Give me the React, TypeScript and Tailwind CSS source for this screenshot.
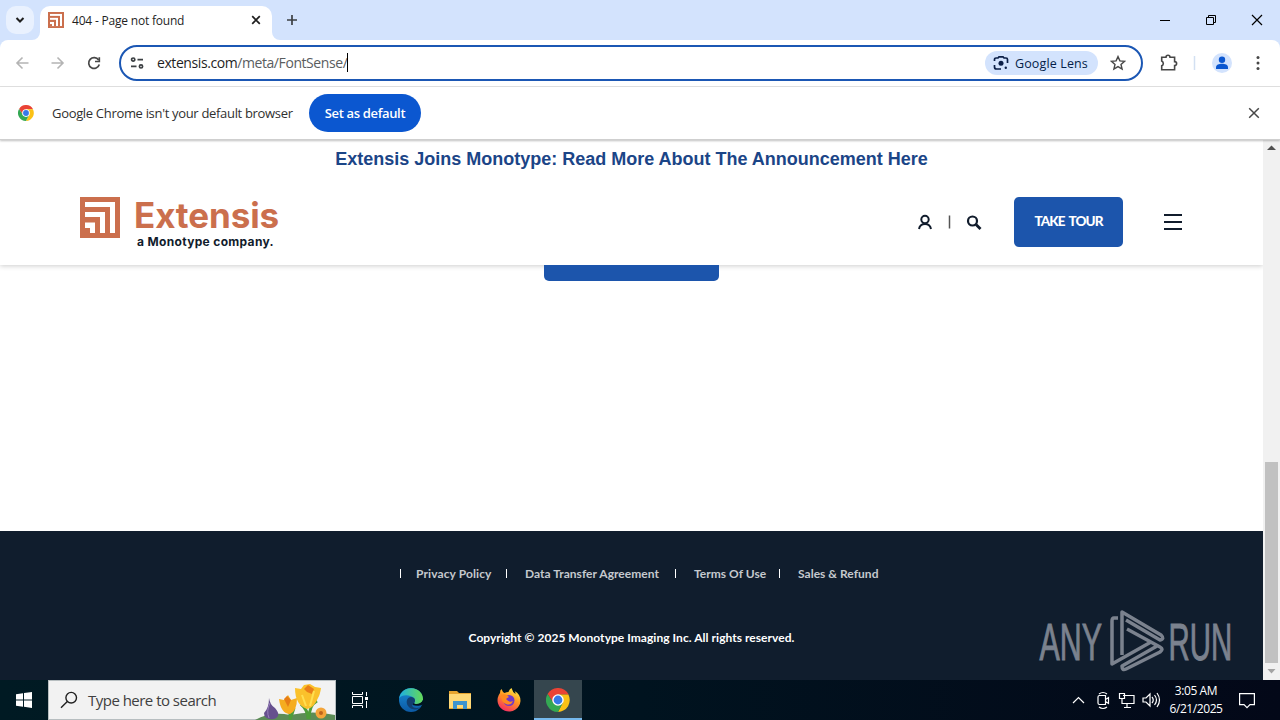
import type { ReactNode } from "react";

const ui = "font-['Open_Sans','Noto_Sans',sans-serif]";

function ExtensisMark({ className }: { className: string }) {
  return (
    <svg className={className} viewBox="0 0 40 41" preserveAspectRatio="none">
      <rect width="40" height="41" fill="#cb6f4d" />
      <rect x="5" y="5" width="30" height="31" fill="#fff" />
      <rect x="5" y="10" width="25" height="26" fill="#cb6f4d" />
      <rect x="5" y="15" width="20" height="21" fill="#fff" />
      <rect x="5" y="20" width="15" height="16" fill="#cb6f4d" />
      <rect x="5" y="25.5" width="10" height="10.5" fill="#fff" />
      <rect x="5" y="31" width="5" height="5" fill="#cb6f4d" />
    </svg>
  );
}

function ChromeLogo({ className }: { className: string }) {
  return (
    <svg className={className} viewBox="0 0 48 48">
      <path d="M3.2 12 14.5 29.5 24 24V13H44.8V12A24 24 0 0 0 3.2 12Z" fill="#ea4335" />
      <path d="M24 13H44.8A24 24 0 0 1 24 48L33.5 29.5Z" fill="#fbc116" />
      <path d="M3.2 12 14.5 29.5 24 35 33.5 29.5 24 48A24 24 0 0 1 3.2 12Z" fill="#34a853" />
      <circle cx="24" cy="24" r="11.5" fill="#fff" />
      <circle cx="24" cy="24" r="8.8" fill="#3579e8" />
    </svg>
  );
}

function TabStrip() {
  return (
    <div className="flex h-10 shrink-0 items-end bg-[#d3e3fd]">
      <button className="mb-1.5 ml-1.5 flex h-7 w-7 items-center justify-center rounded-[10px] bg-[#e9f1fe]">
        <svg className="h-3 w-3" viewBox="0 0 12 12" fill="none" stroke="#1f1f1f" strokeWidth="2">
          <path d="m2.5 4 3.5 3.5L9.5 4" />
        </svg>
      </button>
      <div className="relative ml-1.5 flex h-[34px] w-[232px] items-center rounded-t-[10px] bg-white pb-1.5 pl-2">
        <svg className="absolute bottom-0 -left-2 h-2 w-2" viewBox="0 0 8 8"><path d="M8 0V8H0A8 8 0 0 0 8 0Z" fill="#fff" /></svg>
        <svg className="absolute -right-2 bottom-0 h-2 w-2" viewBox="0 0 8 8"><path d="M0 0V8H8A8 8 0 0 1 0 0Z" fill="#fff" /></svg>
        <ExtensisMark className="h-4 w-4" />
        <span className="ml-2 w-[175px] pt-0.5 text-[12px] tracking-[-0.2px] whitespace-nowrap text-[#1f1f1f]">404 - Page not found</span>
        <svg className="h-[18px] w-[18px]" viewBox="0 0 18 18" stroke="#1f1f1f" strokeWidth="1.7">
          <path d="m5.2 5.2 7.6 7.6m0-7.6-7.6 7.6" />
        </svg>
      </div>
      <svg className="mb-3 ml-3.5 h-4 w-3" viewBox="0 0 12 16" stroke="#3c4043" strokeWidth="1.7">
        <path d="M6 3v10M1 8h10" />
      </svg>
      <div className="mb-2.5 ml-auto flex h-5 items-center pr-[17px]">
        <svg className="h-5 w-[106px]" viewBox="0 0 106 20" fill="none" stroke="#000">
          <path d="M3 10.5h10" />
          <path d="M49.500 7.500h7v7h-7zM51.500 7.500v-2h7v7h-2" />
          <path d="m95 5 10 10m0-10-10 10" strokeWidth="1.2" />
        </svg>
      </div>
    </div>
  );
}

function Toolbar() {
  return (
    <div className="shrink-0 bg-[#d3e3fd]">
      <div className="flex h-[47px] items-start rounded-t-lg border-b border-[#e2e2e2] bg-white pt-[5px]">
        <div className="flex h-9 w-[119px] items-center">
          <svg className="h-5 w-[119px]" viewBox="0 0 119 20" fill="none" strokeWidth="1.6">
            <path d="M28.5 10H17m5.500-5.500L17 10l5.500 5.500" stroke="#b4b4b4" />
            <path d="M51.5 10H63m-5.500-5.500L63 10l-5.500 5.500" stroke="#b4b4b4" />
            <path d="M98.600 7A5.400 5.400 0 1 0 99.300 11.500" stroke="#474747" strokeWidth="1.7" />
            <path d="M99.300 4.200v4.300H95" stroke="#474747" strokeWidth="1.7" />
          </svg>
        </div>
        <div className="flex h-9 w-[1024px] items-center rounded-full border-2 border-[#1b57b4] pl-2">
          <svg className="h-4 w-4" viewBox="0 0 16 16" fill="none" stroke="#3c4043" strokeWidth="1.7">
            <circle cx="4.200" cy="4.600" r="1.600" />
            <path d="M8.500 4.600H14M2 11.400h5.500" />
            <circle cx="12" cy="11.400" r="1.600" />
          </svg>
          <span className="ml-3 pb-0.5 text-[14px] tracking-[-0.42px] whitespace-nowrap text-[#5a5d60]">
            <span className="text-[#1f1f1f]">extensis.com</span>/meta/FontSense/
          </span>
          <span className="mb-0.5 h-[19px] w-px bg-black" />
          <div className="ml-auto flex h-6 w-[113px] items-center rounded-full bg-[#d3e3fd] pl-2">
            <svg className="h-4 w-4" viewBox="0 0 16 16" fill="none" stroke="#0b1f47" strokeWidth="1.7">
              <path d="M1.500 6V4.500a1.500 1.500 0 0 1 1.500-1.500h2l1-1.200h4L11 3h2a1.500 1.500 0 0 1 1.500 1.500V8M1.500 10v2A2 2 0 0 0 3.500 14H8" />
              <circle cx="8" cy="8.300" r="2.500" fill="#0b1f47" stroke="none" />
              <circle cx="12.800" cy="12.800" r="1.200" fill="#0b1f47" stroke="none" />
            </svg>
            <span className="ml-1.5 pt-0.5 text-[12.5px] font-medium tracking-[0.13px] whitespace-nowrap text-[#041e49]">Google Lens</span>
          </div>
          <svg className="mr-[15px] ml-3 h-4 w-4" viewBox="0 0 16 16" fill="none" stroke="#474747" strokeWidth="1.4">
            <path d="m8 1.600 1.900 4.300 4.700.4-3.600 3.100 1.100 4.600L8 11.600 3.900 14 5 9.400 1.400 6.300l4.700-.4Z" />
          </svg>
        </div>
        <svg className="h-9 w-[137px]" viewBox="0 0 137 36" fill="none">
          <path d="M18.700 12.300H23a2 2 0 0 1 4 0h4.600v4.300a2 2 0 0 1 0 4v4.200H18.700v-4a2.600 2.600 0 0 0 0-4.800Z" stroke="#474747" strokeWidth="1.6" />
          <path d="M51.500 11v14" stroke="#d3e0f2" strokeWidth="1.5" />
          <circle cx="79" cy="18" r="10" fill="#d3e3fd" />
          <circle cx="79" cy="14.700" r="3.200" fill="#0b57d0" />
          <path d="M73 24v-1.700c0-4.600 12-4.600 12 0V24Z" fill="#0b57d0" />
          <g fill="#474747"><circle cx="115" cy="12.500" r="1.500" /><circle cx="115" cy="18" r="1.500" /><circle cx="115" cy="23.500" r="1.500" /></g>
        </svg>
      </div>
    </div>
  );
}

function InfoBar() {
  return (
    <div className="relative z-10 flex h-[53px] shrink-0 items-center border-b border-[#cfcfcf] bg-white pl-[18px] shadow-[0_1px_2px_rgba(0,0,0,0.25)]">
      <ChromeLogo className="h-4 w-4" />
      <span className="ml-[18px] w-[257px] pt-0.5 text-[13px] tracking-[-0.32px] whitespace-nowrap text-[#303030]">Google Chrome isn't your default browser</span>
      <button className="h-[38px] w-28 rounded-full bg-[#0b57d0] pt-px text-[13px] font-semibold tracking-[-0.35px] whitespace-nowrap text-white">Set as default</button>
      <svg className="mr-5 ml-auto h-3 w-3" viewBox="0 0 12 12" stroke="#474747" strokeWidth="1.5">
        <path d="m1.200 1.200 9.600 9.600m0-9.600-9.600 9.600" />
      </svg>
    </div>
  );
}

function SiteHeader() {
  return (
    <header className="h-[125px] bg-white shadow-[0_1px_5px_rgba(0,0,0,0.2)]">
      <p className="pt-[5px] text-center font-['Liberation_Sans',sans-serif] text-[18px] leading-7 font-bold whitespace-nowrap text-[#1b4587]">
        Extensis Joins Monotype: Read More About The Announcement Here
      </p>
      <div className="flex items-start pt-6 pl-20">
        <ExtensisMark className="h-[41px] w-10" />
        <div className="-mt-0.5 ml-[15px] flex w-[149px] flex-col font-['Inter',sans-serif] whitespace-nowrap">
          <span className="-ml-px text-[35px] leading-[41px] font-bold tracking-[-0.1px] text-[#cb6f4d]">Extensis</span>
          <span className="ml-0.5 text-[12px] leading-3 font-bold tracking-[0.33px] text-[#111c2c]">a Monotype company.</span>
        </div>
        <svg className="mt-[15px] ml-[634px] h-5 w-[68px]" viewBox="0 0 68 20" fill="none" stroke="#111c2c">
          <circle cx="7" cy="7.500" r="3.700" strokeWidth="2" />
          <path d="M1 17c.7-3.500 3-5 6-5s5.300 1.500 6 5" strokeWidth="2" />
          <path d="M31.500 3.500v13" stroke="#555" strokeWidth="1.5" />
          <circle cx="54.500" cy="9" r="4.500" strokeWidth="2.2" />
          <path d="m58 12.500 4.500 4.500" strokeWidth="2.8" />
        </svg>
        <button className="ml-7 h-[50px] w-[109px] rounded-[5px] bg-[#1c55ac] pb-px font-['Lato',sans-serif] text-[13.5px] font-black tracking-[-0.9px] [word-spacing:2px] text-white">TAKE TOUR</button>
        <svg className="mt-[17px] ml-[41px] h-4 w-[18px]" viewBox="0 0 18 16" stroke="#111c2c" strokeWidth="2"><path d="M0 1h18M0 8h18M0 15h18" /></svg>
      </div>
    </header>
  );
}

const footerLinks = [
  { label: "Privacy Policy", width: "w-[106px]" },
  { label: "Data Transfer Agreement", width: "w-[169px]" },
  { label: "Terms Of Use", width: "w-[104px]" },
  { label: "Sales & Refund", width: "w-[100px]" },
];

function SiteFooter() {
  return (
    <footer className="h-[149px] bg-[#101d2d] font-['Lato',sans-serif] text-[12px] whitespace-nowrap">
      <nav className="flex h-[86px] items-center pl-[400px] font-bold text-[#c5c9ce]">
        {footerLinks.map((link, i) => (
          <a key={link.label} className={`flex items-center ${link.width}`}>
            <span className="mb-px h-[9px] w-px bg-white" />
            <span className={i === 0 ? "ml-[15px] tracking-[0.1px]" : "ml-[18px] tracking-[0.03px]"}>{link.label}</span>
          </a>
        ))}
      </nav>
      <p className="pt-3 text-center font-bold tracking-[0.04px] text-white">Copyright © 2025 Monotype Imaging Inc. All rights reserved.</p>
    </footer>
  );
}

function Watermark() {
  return (
    <svg className="absolute top-[606px] left-[1036px] h-[70px] w-[200px] overflow-visible" viewBox="0 0 200 70" fill="#7b828e">
      <g fontSize="52" fontFamily="Liberation Sans, sans-serif" stroke="#7b828e" strokeWidth=".8">
        <text transform="translate(3.500 53.500) scale(.585 1)" vectorEffect="non-scaling-stroke">ANY</text>
        <text transform="translate(132.500 53.500) scale(.565 1)" vectorEffect="non-scaling-stroke">RUN</text>
      </g>
      <g fill="none" stroke="#7b828e" strokeWidth="3.5" strokeLinejoin="round">
        <path d="M82 12h-4q-2 0-2 3v43l39-22" />
        <path d="M86 49V6l39 23q4 4-1 5l-34-20" />
        <path d="m91 23 33 18q4 2 0 5L90 63q-4 2-4-3l35-20" />
      </g>
    </svg>
  );
}

function Scrollbar() {
  return (
    <div className="flex w-[17px] flex-col items-center bg-[#f1f1f1]">
      <svg className="h-[17px] w-[17px]" viewBox="0 0 17 17"><path d="m4 10 4.500-4.500L13 10Z" fill="#505050" /></svg>
      <div className="mt-[305px] h-[201px] w-[13px] bg-[#c1c1c1]" />
      <svg className="h-[17px] w-[17px]" viewBox="0 0 17 17"><path d="m4.500 6 4 4.500 4-4.500Z" fill="#a3a3a3" /></svg>
    </div>
  );
}

function Task({ children, active }: { children: ReactNode; active?: boolean }) {
  return (
    <div className={active ? "ml-0.5 flex h-10 w-12 items-center justify-center border-b-2 border-[#76b9ed] bg-[#35464e] pt-0.5" : "flex h-10 w-[49px] items-center justify-center pr-0.5"}>
      {children}
    </div>
  );
}

function Flowers() {
  return (
    <svg className="ml-auto h-[39px] w-20" viewBox="0 0 80 39">
      <path d="M0 39Q16 30 35 34Q58 29 80 34V39Z" fill="#5c8c56" />
      <path d="M35 38q1-10-5-15m5 16 4-12M53 38q0-9-7-15m8 15q0-14 8-18" fill="none" stroke="#4d9d3a" strokeWidth="3" />
      <path d="M14 17q1 7 6 10 7 8-1 11-10 1-10-6 5-5 5-15Z" fill="#66508e" />
      <path d="M15 22q-4 8-1 15" fill="none" stroke="#9980bd" />
      <path d="m24 18 5 1 4-5 3 5 6-2q0 13-7 16-9 0-11-15Z" fill="#f5ad20" />
      <path d="m29 18 3-3 4 4-3 7Z" fill="#e67d16" />
      <path d="m40 7 6 1 3-4 6-1 5 3 6 1q-1 7-3 10-4 10-11 11-12-4-12-21Z" fill="#fac12b" />
      <path d="m49 8 4-4 6 4-2 5-5-2Z" fill="#e97e18" />
      <path d="m47 14 4 11m8-15-4 15" stroke="#ffdf50" strokeWidth="2" />
      <circle cx="66" cy="32" r="5.500" fill="#f4a53a" /><circle cx="66" cy="32" r="2" fill="#bd651c" />
    </svg>
  );
}

function Taskbar() {
  return (
    <div className={`${ui} flex h-10 shrink-0 items-center bg-linear-to-r from-[#001a23] via-[#00131f] to-[#030818] text-white`}>
      <div className="flex w-12 justify-center">
        <svg className="h-4 w-4" viewBox="0 0 16 16" fill="#fff"><path d="M0 2.300 7 1.300V7.500H0ZM8 1.100 16 0v7.500H8ZM0 8.500h7v6.200l-7-1ZM8 8.500h8V16l-8-1.200Z" /></svg>
      </div>
      <div className="flex h-10 w-72 items-center border border-[#b7bec0] bg-[#f2f2f2] pl-[11px]">
        <svg className="h-[18px] w-[18px]" viewBox="0 0 18 18" fill="none" stroke="#202020" strokeWidth="1.4"><circle cx="11.200" cy="6.700" r="5.300" /><path d="M7.300 10.500 1 16.800" /></svg>
        <span className="ml-2.5 text-[15px] tracking-[-0.52px] whitespace-nowrap text-[#404040]">Type here to search</span>
        <Flowers />
      </div>
      <Task>
        <svg className="h-4 w-4" viewBox="0 0 16 16" fill="none" stroke="#fff"><path d="M.5 0v2.500h10V0M.5 4.500h10v7H.5zM.5 16v-2.500h10V16M14.500 0v4m0 5v7" /><path d="M13 5h3v3h-3z" fill="#fff" stroke="none" /></svg>
      </Task>
      <Task>
        <svg className="ml-1 h-6 w-6" viewBox="0 0 24 24">
          <defs>
            <linearGradient id="edgeTop"><stop stopColor="#1caee4" /><stop offset="1" stopColor="#66da55" /></linearGradient>
            <linearGradient id="edgeBase" x2="0" y2="1"><stop stopColor="#198cd5" /><stop offset="1" stopColor="#0c59a4" /></linearGradient>
          </defs>
          <circle cx="12" cy="12" r="12" fill="url(#edgeBase)" />
          <path d="M0 10.500C2 0 12-1 17 1.200c5 2 7 6 7 10 0 6-8 7-9 4 2-2 1-6-3-7C7 6.500 2 7.500 0 10.500Z" fill="url(#edgeTop)" />
          <path d="M12 9c-3 0-5 3-4 7 2 6 10 7 14 3-4 2-9 1-9-2 2 1 7 1 10-1 1-1 1-2 1-4-2 5-9 5-9 3 2-2 1-6-3-6Z" fill="#123f70" />
          <path d="M14.500 15c2 2 8 1 9.500-3v4q-2 3-10 1Z" fill="#00131f" />
        </svg>
      </Task>
      <Task>
        <svg className="ml-1 h-5 w-[22px]" viewBox="0 0 22 20"><path d="M0 1h8l2 2h12v16H0Z" fill="#e7a52f" /><path d="M0 4h22v14H0Z" fill="#ffd977" /><path d="M4 11h14v8h-4v-4H8v4H4Z" fill="#3d94cf" /></svg>
      </Task>
      <Task>
        <svg className="ml-1 h-6 w-6" viewBox="0 0 24 24">
          <defs><linearGradient id="fox" x1=".8" y1="0" x2=".3" y2="1"><stop stopColor="#fff04a" /><stop offset=".45" stopColor="#ff9822" /><stop offset="1" stopColor="#f52a63" /></linearGradient></defs>
          <path d="M3 5q0-3 1.500-4 1 3 3 4 2-1 4-1 1-3 3-4 1 4 4 6 0-2-1-3 6 3 6 10A11.500 11.500 0 1 1 3 5Z" fill="url(#fox)" />
          <circle cx="12" cy="12.500" r="5.500" fill="#7139c7" />
          <path d="M4 7q5-2 8 2-2 1-3 2 3 4 7 2-2 5-7 3-5-2-5-9Z" fill="#ff8a20" />
        </svg>
      </Task>
      <Task active><ChromeLogo className="h-6 w-6" /></Task>
      <svg className="ml-auto h-10 w-[92px]" viewBox="0 0 92 40" fill="none" stroke="#fff" strokeWidth="1.2">
        <path d="m3 23 5.500-5.500L14 23" />
        <path d="M29.500 15.500h6v9h-6q-1.500 0-1.500-1.500v-6q0-1.500 1.500-1.500Zm6 4 3-2v6l-3-2M29 14q4-3 8 0m-8 13q4 3 8 0" />
        <path d="M53 15.500h11v8H52v-3m5 3v4m-3 0h7M49.500 13.500h5v5h-5zm2.500 5v5" />
        <path d="M73 18h3l4-4v12l-4-4h-3Zm9-1q2.500 3 0 6m2.500-8q4 5 0 10m2.500-12q5 7 0 14" />
      </svg>
      <div className="-ml-[5px] w-[78px] text-center text-[12px] leading-[18px] tracking-[-0.42px] whitespace-nowrap">3:05 AM<br />6/21/2025</div>
      <svg className="mr-[25px] ml-1 h-[18px] w-4" viewBox="0 0 16 18" fill="none" stroke="#fff" strokeWidth="1.2"><path d="M.6 2.600h14.800v11H11l-3 3-3-3H.600Z" /></svg>
    </div>
  );
}

export default function App() {
  return (
    <div className="relative flex h-[720px] w-[1280px] flex-col overflow-hidden bg-white">
      <div className={ui}>
        <TabStrip />
        <Toolbar />
        <InfoBar />
      </div>
      <div className="flex h-[540px] shrink-0">
        <main className="w-[1263px] overflow-hidden bg-white">
          <SiteHeader />
          <div className="h-[266px]">
            <div className="mx-auto h-4 w-[175px] rounded-b-[5px] bg-[#1c55ac]" />
          </div>
          <SiteFooter />
        </main>
        <Scrollbar />
      </div>
      <Taskbar />
      <Watermark />
    </div>
  );
}
